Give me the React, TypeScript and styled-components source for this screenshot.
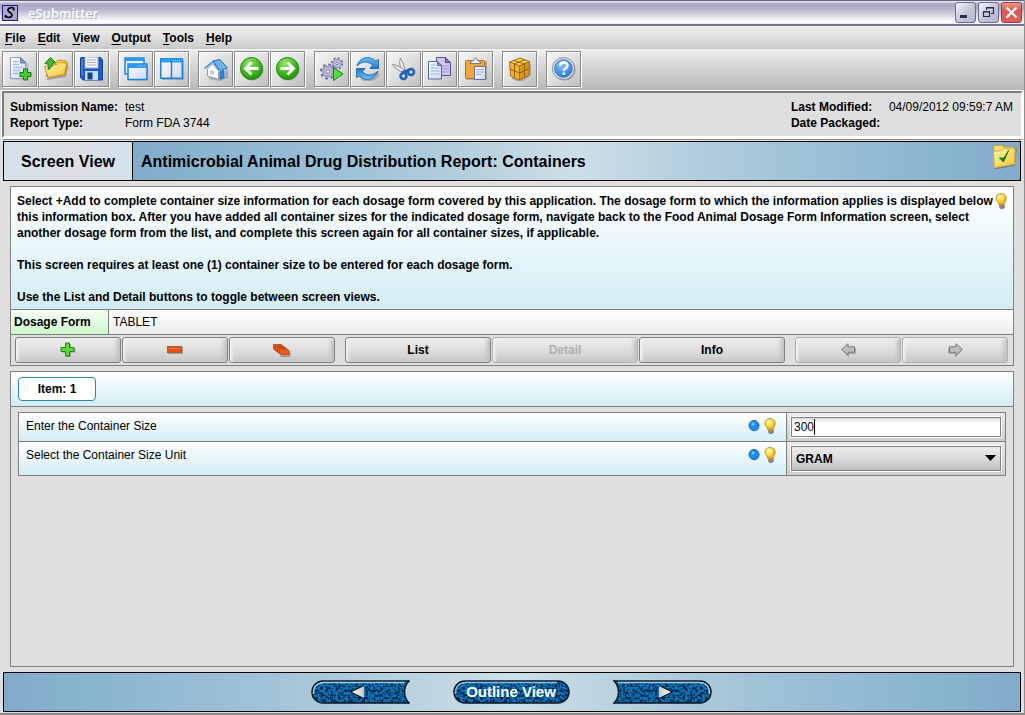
import React, { useState } from "react";
import styled, { createGlobalStyle, css } from "styled-components";

const GlobalStyle = createGlobalStyle`
  *, *::before, *::after { box-sizing: border-box; }
  body {
    margin: 0;
    background: #dfdfdf;
    color: #000;
    font: 12px/16px "Liberation Sans", Arial, sans-serif;
  }
  button, input, select { font: inherit; color: inherit; margin: 0; }
  svg { display: block; flex: none; }
`;

/* ---------- Window frame ---------- */

const Window = styled.div`
  display: flex;
  flex-direction: column;
  min-height: 100vh;
  border-right: 1px solid #8c8c8c;
  border-bottom: 2px solid #8c8c8c;
`;

const TitleBar = styled.header`
  display: flex;
  align-items: center;
  height: 26px;
  padding: 0 2px;
  border-top: 1px solid #66638a;
  border-bottom: 2px solid #77748f;
  background: linear-gradient(#f2f2f7 0, #a9a7c3 3px, #b4b2ca 8px, #dddde7 15px, #ffffff 21px, #eeeef4 100%);
`;

const AppTitle = styled.h1`
  flex: 1;
  margin: 0 0 0 10px;
  color: #fbfbfd;
  font: 600 13px/20px "Open Sans", "Noto Sans", sans-serif;
  text-shadow: 1px 1px 0 #b0afbf;
`;

const CaptionButtons = styled.div`
  display: flex;
  gap: 2px;
`;

const CaptionButton = styled.button<{ $close?: boolean }>`
  display: grid;
  place-items: center;
  width: 21px;
  height: 21px;
  padding: 0;
  border: 1px solid ${(p) => (p.$close ? "#a03a4c" : "#6c6a92")};
  border-radius: 3px;
  background: ${(p) =>
    p.$close
      ? "linear-gradient(#e39a84, #dc5a55 40%, #e0605c)"
      : "linear-gradient(135deg, #f4f4fa, #c8c8dc 50%, #b3b3cc)"};
`;

const MenuBar = styled.nav`
  display: flex;
  gap: 12px;
  height: 23px;
  padding: 4px 5px 0;
  background: linear-gradient(#ededed, #e2e2e2 40%, #c9c9c9);
`;

const MenuItem = styled.button`
  height: 16px;
  padding: 0;
  border: 0;
  background: none;
  font-weight: 700;
  u { text-underline-offset: 2px; }
`;

const Toolbar = styled.div`
  display: flex;
  gap: 9px;
  height: 41px;
  padding: 2px;
  background: linear-gradient(#f0f0f0, #dcdcdc 30%, #b8b8b8);
`;

const ToolGroup = styled.div`
  display: flex;
  gap: 1px;
`;

const ToolButton = styled.button`
  display: grid;
  place-items: center;
  width: 35px;
  height: 36px;
  padding: 0;
  border: 1px solid #8a8a8a;
  box-shadow: 1px 1px 0 #fff, inset 1px 1px 0 #fff;
  background: linear-gradient(135deg, #f7f7f7, #e0e0e0 50%, #bdbdbd);
`;

/* ---------- Submission summary ---------- */

const Summary = styled.section`
  display: flex;
  justify-content: space-between;
  height: 47px;
  margin: 1px 1px 0 2px;
  padding: 6px 8px 4px 6px;
  border: 2px solid;
  border-color: #7c7c7c #fff #fff #7c7c7c;
  box-shadow: 0 0 0 1px #fff, 0 3px 0 -1px #8a8a8a;
`;

const Facts = styled.dl<{ $term: number }>`
  display: grid;
  grid-template-columns: ${(p) => p.$term}px auto;
  grid-auto-rows: 16px;
  margin: 0;
  dt { font-weight: 700; }
  dd { margin: 0; }
`;

/* ---------- Screen heading ---------- */

const steelBlue = css`
  background: linear-gradient(90deg, #82abc9 0, #88b4cf 8%, #9abfd6 22%, #b2cddd 36%, #cddfe8 50%, #b2cddd 64%, #9abfd6 78%, #88b4cf 92%, #82abc9 100%);
`;

const ScreenHeader = styled.div`
  display: flex;
  height: 40px;
  margin: 3px 3px 0;
  border: 1px solid #000;
`;

const ViewLabel = styled.div`
  width: 129px;
  border-right: 1px solid #000;
  background: linear-gradient(90deg, #d3e2ec, #dedee4 50%, #d3e2ec);
  font: 700 16px/40px "Liberation Sans", Arial, sans-serif;
  text-align: center;
`;

const ScreenTitle = styled.div`
  ${steelBlue}
  display: flex;
  flex: 1;
  justify-content: space-between;
  padding: 2px 3px 0 8px;
  h2 { margin: 0; font: 700 16px/36px "Liberation Sans", Arial, sans-serif; }
`;

/* ---------- Panels ---------- */

const ice = css`
  background: linear-gradient(#fff, #e4f5fa 60%, #d3ecf4);
`;

const Panel = styled.section<{ $fill?: boolean }>`
  ${(p) => p.$fill && "flex: 1;"}
  margin: 5px 10px 0;
  border: 1px solid #808080;
`;

const Help = styled.div`
  ${ice}
  display: flex;
  justify-content: space-between;
  padding: 6px 5px 4px 6px;
  border-bottom: 1px solid #808080;
  font-weight: 700;
  p { margin: 0 0 16px; }
  p:last-child { margin: 0; }
`;

const DosageRow = styled.div`
  display: flex;
  height: 25px;
  border-bottom: 1px solid #808080;
  background: linear-gradient(#fff, #ececec);
  line-height: 24px;
`;

const DosageLabel = styled.div`
  width: 98px;
  margin-right: 4px;
  padding-left: 3px;
  border-right: 1px solid #808080;
  background: linear-gradient(#f6fff6, #ccf7cc);
  font-weight: 700;
`;

const ButtonRow = styled.div`
  display: flex;
  gap: 10px;
  padding: 2px 5px 2px 4px;
`;

const ButtonGroup = styled.div<{ $grow: number }>`
  display: flex;
  gap: 1px;
  flex: ${(p) => p.$grow} 1 0;
`;

const ActionButton = styled.button`
  display: flex;
  flex: 1;
  align-items: center;
  justify-content: center;
  height: 26px;
  padding: 0;
  border: 1px solid #808080;
  border-radius: 3px;
  background: linear-gradient(#efefef, #dedede 50%, #cacaca);
  box-shadow: inset 2px 1px 3px #f4f4f4, inset -3px -1px 4px #bebebe;
  font-weight: 700;
  &:disabled {
    border-color: #b0b0b0;
    color: #b0b0b0;
  }
`;

const TabStrip = styled.div`
  ${ice}
  height: 35px;
  padding: 5px 7px;
  border-bottom: 1px solid #808080;
`;

const Tab = styled.button`
  width: 78px;
  height: 24px;
  padding: 0;
  border: 1px solid #2d87a3;
  border-radius: 4px;
  background: #fff;
  font-weight: 700;
`;

const Fields = styled.form`
  margin: 5px 7px;
  border: 1px solid #808080;
`;

const Field = styled.div<{ $height: number }>`
  display: grid;
  grid-template-columns: minmax(0, 1fr) 218px;
  height: ${(p) => p.$height}px;
  & + & { border-top: 1px solid #808080; }
`;

const FieldLabel = styled.div`
  ${ice}
  display: flex;
  align-items: flex-start;
  gap: 3px;
  padding: 5px 9px 0 7px;
  border-right: 1px solid #808080;
  label { flex: 1; }
`;

const FieldControl = styled.div`
  position: relative;
  padding: 4px;
  background: linear-gradient(#ebebeb, #dadada 50%, #cecece);
`;

const boxed = css`
  display: block;
  width: 100%;
  border: 1px solid #808080;
  outline: 1px solid #fff;
`;

const TextInput = styled.input`
  ${boxed}
  height: 20px;
  padding: 0 2px;
  background: linear-gradient(#dcdcdc, #fff 5px);
`;

const Caret = styled.span`
  position: absolute;
  top: 6px;
  left: 27px;
  width: 1px;
  height: 16px;
  background: #000;
`;

const SelectBox = styled.div`
  position: relative;
  svg {
    position: absolute;
    top: 9px;
    right: 5px;
    pointer-events: none;
  }
`;

const Select = styled.select`
  ${boxed}
  height: 25px;
  padding: 0 4px;
  appearance: none;
  border-radius: 0;
  background: linear-gradient(#ebebeb, #dcdcdc 50%, #bebebe);
  font-weight: 700;
`;

/* ---------- Footer ---------- */

const Footer = styled.footer`
  ${steelBlue}
  display: flex;
  align-items: center;
  justify-content: center;
  gap: 43px;
  height: 40px;
  margin: 5px 3px 1px;
  padding-right: 2px;
  border: 1px solid #000;
`;

const NavButton = styled.button`
  display: grid;
  place-items: center;
  padding: 0;
  border: 0;
  background: none;
  color: #fff;
  font: 700 15px/24px "Liberation Sans", Arial, sans-serif;
  & > * { grid-area: 1 / 1; }
  span { z-index: 1; }
`;

/* ---------- Icons ---------- */

type IconProps = { children: React.ReactNode; w?: number; h?: number };

const Icon = ({ children, w = 24, h = 24 }: IconProps) => (
  <svg width={w} height={h} viewBox={`0 0 ${w} ${h}`} fill="none" aria-hidden="true">
    {children}
  </svg>
);

const Defs = styled.svg`
  position: absolute;
  width: 0;
  height: 0;
`;

const Gradients = () => (
  <Defs aria-hidden="true">
    <defs>
      <linearGradient id="paper" x1="0" y1="0" x2="1" y2="1">
        <stop stopColor="#fff" />
        <stop offset="1" stopColor="#cfd6f2" />
      </linearGradient>
      <linearGradient id="gold" x1="0" y1="0" x2="1" y2="1">
        <stop stopColor="#fff6b0" />
        <stop offset="1" stopColor="#f2c22c" />
      </linearGradient>
      <linearGradient id="sky" x1="0" y1="0" x2="0" y2="1">
        <stop stopColor="#6cc0fa" />
        <stop offset="1" stopColor="#1f78cc" />
      </linearGradient>
      <radialGradient id="green" cx=".4" cy=".25" r=".8">
        <stop stopColor="#9be36a" />
        <stop offset=".6" stopColor="#3fb81c" />
        <stop offset="1" stopColor="#1e8a10" />
      </radialGradient>
      <radialGradient id="blue" cx=".4" cy=".25" r=".8">
        <stop stopColor="#8cc8ff" />
        <stop offset="1" stopColor="#2277dd" />
      </radialGradient>
      <radialGradient id="bulb" cx=".4" cy=".3" r=".7">
        <stop stopColor="#fffbd0" />
        <stop offset=".5" stopColor="#ffd93b" />
        <stop offset="1" stopColor="#e39a10" />
      </radialGradient>
      <linearGradient id="shine" x1="0" y1="0" x2="1" y2="0">
        <stop stopColor="#fff" />
        <stop offset="1" stopColor="#c4c4c4" />
      </linearGradient>
      <filter id="granite" x="0" y="0" width="1" height="1" colorInterpolationFilters="sRGB">
        <feTurbulence type="fractalNoise" baseFrequency=".4" numOctaves="2" seed="4" />
        <feColorMatrix values="0 0 0 0 0  0 0 0 0 .14  0 0 0 0 .3  5 0 0 0 -2.2" />
        <feComposite in2="SourceGraphic" operator="in" />
      </filter>
    </defs>
  </Defs>
);

const AppIcon = () => (
  <Icon w={16} h={16}>
    <rect x=".5" y=".5" width="15" height="15" fill="#aaa7cf" stroke="#241a86" />
    <path d="M12 3.5C10 2 6 2.600 6 5.200C6 7.500 10.500 7.800 10 10.400C9.600 12.800 6 13 3.500 11.500M12 3l-.5 2.500M3.800 10l-.5 2.500" stroke="#08080c" strokeWidth="1.800" />
  </Icon>
);

const NewIcon = () => (
  <Icon>
    <path d="M3.500 1.500h11l6 6v15h-17z" fill="#9a9a9a" opacity=".5" />
    <path d="M2.500.5h10l5 5v16h-15z" fill="url(#paper)" stroke="#8d9cbc" />
    <path d="M12.500.5v5.500h5.500z" fill="#6f9fd4" stroke="#5b7fb0" />
    <path d="M5 4.500h5M5 7.500h6M5 10.500h10M5 13.500h7M5 16.500h5" stroke="#a9c0e2" strokeWidth="1.500" />
    <path d="M15.500 12h4v3.500H23v4h-3.500V23h-4v-3.500H12v-4h3.500z" fill="#46cf2c" stroke="#117a10" />
  </Icon>
);

const OpenIcon = () => (
  <Icon>
    <path d="M3 22l18-3 3-13" stroke="#777" opacity=".6" strokeWidth="2" />
    <path d="M2.500 19.500L6 6.500l6-.5 2-3 8 1v13z" fill="#f9dc5c" stroke="#c08a18" />
    <path d="M.5 9.500l12.500-2 2-2 8 .5-2.500 11.500-16.500 3z" fill="url(#gold)" stroke="#c89018" />
    <path d="M1 6.500L6.500.5l5 5-3 .5c0 3-1 5-4.500 6.500C4.500 10 4.500 9 4 7z" fill="#41bb2c" stroke="#1a7d18" />
  </Icon>
);

const SaveIcon = () => (
  <Icon>
    <path d="M1 .5h19.500l2 2.500v20H3L.5 20.500V1z" fill="#1c5bc4" stroke="#123c8c" />
    <rect x="5" y="0" width="13" height="11" fill="#f1f1f1" stroke="#9bb4dc" />
    <path d="M7 3h9M7 5.500h9M7 8h9" stroke="#b6b6b6" />
    <rect x="5" y="14" width="13" height="9" fill="#bfe0fa" />
    <rect x="7.500" y="15.500" width="5" height="7" fill="#1d3f80" />
    <path d="M2 2v17" stroke="#5aa0f0" />
  </Icon>
);

const WindowsIcon = () => (
  <Icon>
    <rect x="1" y="1" width="19" height="16" fill="#e9f1fd" stroke="#1b83e2" strokeWidth="1.500" />
    <path d="M1 2.500h19" stroke="#2c9af5" strokeWidth="3" />
    <rect x="5" y="8.500" width="19" height="15" fill="#777" opacity=".5" />
    <rect x="4" y="7" width="19" height="15.500" fill="url(#paper)" stroke="#1b83e2" strokeWidth="1.500" />
    <path d="M4 9h19" stroke="#2c9af5" strokeWidth="4" />
    <path d="M14 9h7" stroke="#9cd4ff" strokeDasharray="1 1" />
  </Icon>
);

const SplitIcon = () => (
  <Icon>
    <rect x="2" y="3" width="22" height="20" fill="#777" opacity=".5" />
    <rect x=".75" y="1.750" width="21.500" height="19.500" fill="url(#paper)" stroke="#1b83e2" strokeWidth="1.500" />
    <path d="M1 3.500h21" stroke="#2c9af5" strokeWidth="4" />
    <path d="M11.500 4v17" stroke="#1b83e2" strokeWidth="1.500" />
    <path d="M13 3.500h7" stroke="#9cd4ff" strokeDasharray="1 1" />
  </Icon>
);

const HomeIcon = () => (
  <Icon>
    <path d="M5 21l11 2 7-3v-7" stroke="#777" strokeWidth="2" opacity=".5" />
    <path d="M3.500 12l5-5 6 6.500v9l-11-3.500z" fill="#fafafa" stroke="#999" />
    <path d="M14.500 13.500L20 10l2 2v8l-7.500 2.500z" fill="#dce8f6" stroke="#8a9bb4" />
    <path d="M.5 11.500L9 4.500l6.500 8.500" stroke="#3a87cc" strokeWidth="1.500" />
    <path d="M9 4l7-1.500L23.500 11l-8 2.500z" fill="#6cb4ee" stroke="#2a70b0" />
    <path d="M16 15l4-1.500v7L16 22z" fill="#2f8ce0" stroke="#1b62a8" />
    <path d="M6 13l4 1v4l-4-1z" fill="#b7cde6" />
  </Icon>
);

const BackIcon = ({ flip = false }: { flip?: boolean }) => (
  <Icon>
    <circle cx="12.500" cy="12.500" r="11" fill="#777" opacity=".5" />
    <circle cx="11.500" cy="11.500" r="11" fill="url(#green)" stroke="#1f8512" />
    <g transform={flip ? "translate(23 0) scale(-1 1)" : undefined}>
      <path d="M18.500 11.500H6M11.500 5.500l-6 6 6 6" stroke="#fff" strokeWidth="2.800" />
    </g>
  </Icon>
);

const RunIcon = () => (
  <Icon>
    <circle cx="17" cy="6.500" r="5.300" stroke="#74749c" strokeWidth="2" strokeDasharray="2.100 2.060" />
    <circle cx="17" cy="6.500" r="3.800" fill="#c9c9e4" stroke="#a0a0c6" strokeWidth="1.800" />
    <circle cx="17" cy="6.500" r="1.300" fill="#f2f2f2" stroke="#74749c" />
    <circle cx="8" cy="14.500" r="7" stroke="#74749c" strokeWidth="2.200" strokeDasharray="2.750 2.750" />
    <circle cx="8" cy="14.500" r="5" fill="#c9c9e4" stroke="#a0a0c6" strokeWidth="2.500" />
    <circle cx="8" cy="14.500" r="2" fill="#f2f2f2" stroke="#74749c" />
    <path d="M13.500 10.500l9.500 6.500-9.500 6.500z" fill="#5bdc3c" stroke="#15801a" />
  </Icon>
);

const turn = "M1 9C2.500 3.500 7 .5 11.500.5c3.500 0 6 1.500 7.500 3.500L22.500 2.500V11.500h-8.500l2.500-3.200C12.500 3.800 5.500 4 1 9z";

const RefreshIcon = () => (
  <Icon>
    <path d="M2 16l4 6c5 3 13 2 17-5" stroke="#777" strokeWidth="2" opacity=".45" />
    <path d={turn} fill="url(#sky)" stroke="#165da8" strokeWidth=".8" />
    <path d={turn} fill="url(#sky)" stroke="#165da8" strokeWidth=".8" transform="rotate(180 11.500 11.500)" />
  </Icon>
);

const CutIcon = () => (
  <Icon>
    <path d="M8.500 1c2 3.500 3.500 8 4.500 12.500l-2.500 1C8 10 7 5.500 8.500 1z" fill="#f6f6f6" stroke="#8c8c8c" />
    <path d="M.5 7.500c4.500.5 9 3 12.500 6l-1.500 2C8 14 2.500 12 .5 7.500z" fill="#ececec" stroke="#8c8c8c" />
    <ellipse cx="11.500" cy="19" rx="3" ry="3" stroke="#1c62b8" strokeWidth="2.500" />
    <ellipse cx="19" cy="15" rx="3" ry="3" stroke="#1c62b8" strokeWidth="2.500" />
    <path d="M10.500 15.500l6-2" stroke="#1c62b8" strokeWidth="3" />
  </Icon>
);

const CopyIcon = () => (
  <Icon>
    <path d="M8.500.5h9l5 5v13h-14z" fill="#cfc6ea" stroke="#5c4c96" />
    <path d="M17.500.5v5h5z" fill="#8674be" stroke="#5c4c96" />
    <path d="M14 9h7M14 12h7M14 15h7" stroke="#a395d2" />
    <path d="M.5 4.500h9l4 4v13.500H.5z" fill="url(#paper)" stroke="#4a6c9e" />
    <path d="M9.500 4.500v4h4z" fill="#6fa4da" stroke="#4a6c9e" />
    <path d="M2.500 8h5M2.500 11h9M2.500 14h9M2.500 17h9" stroke="#b4c9e8" strokeWidth="1.500" />
  </Icon>
);

const PasteIcon = () => (
  <Icon>
    <rect x="2" y="4" width="21" height="19" rx="1" fill="#777" opacity=".5" />
    <rect x="1.500" y="3.500" width="19" height="18" rx="1" fill="#f0a63a" stroke="#b87414" />
    <path d="M6 6.500l2-3h1.500c0-3.500 4-3.500 4 0H15l2 3z" fill="#ececec" stroke="#7c7c7c" />
    <path d="M10.500 9.500h11v13h-11z" fill="url(#paper)" stroke="#6470ac" />
    <path d="M12 12.500h8M12 15h8M12 17.500h5" stroke="#a0a9d6" />
  </Icon>
);

const PackageIcon = () => (
  <Icon>
    <path d="M4 21l9 3 9-6V7" stroke="#777" strokeWidth="2" opacity=".5" />
    <path d="M1.500 5L12 1l9.500 3.500L11.500 9z" fill="#fbcf58" stroke="#a87010" />
    <path d="M1.500 5l10 4v14l-9-4z" fill="#f4b22c" stroke="#a87010" />
    <path d="M21.500 4.500l-10 4.500v14l9.500-5z" fill="#dd9418" stroke="#a87010" />
    <path d="M6 3.500L16.500 7v13.500M17 2.800L6.500 7v13.500M2 12l9.500 4 9.500-4.500" stroke="#7c4e04" strokeWidth=".8" />
  </Icon>
);

const HelpIcon = () => (
  <Icon>
    <circle cx="12.500" cy="12.500" r="11" fill="#777" opacity=".6" />
    <circle cx="11.500" cy="11.500" r="11" fill="#dfe4ea" stroke="#858d96" />
    <circle cx="11.500" cy="11.500" r="8.800" fill="url(#blue)" stroke="#3b74bc" />
    <path d="M8 9c0-4.500 7.500-4.500 7.500-.5 0 3-3.700 2.500-3.700 5.500M11.800 15.500v2.500" stroke="#fff" strokeWidth="2.400" />
  </Icon>
);

const FolderCheckIcon = () => (
  <Icon w={25} h={25}>
    <path d="M3 24.500l19-3.500 2-17" stroke="#4e6c80" strokeWidth="2" opacity=".6" />
    <path d="M1.500 3.500l1-2 7-.5 2 2h10.500l1 2-.5 15-20 3.500z" fill="#f9dc74" stroke="#c99a30" />
    <path d="M1.500 7.500l8-1 2-2 11.500.5-.5 15-20 3.500z" fill="url(#gold)" stroke="#dcb044" />
    <path d="M7.500 14l4 4 5-11.500L12 14z" fill="#118025" stroke="#118025" />
  </Icon>
);

const BulbIcon = () => (
  <Icon w={14} h={16}>
    <path d="M5.500 12.500h5v2l-2 1.500H7L5.500 14.500z" fill="#8a8a8a" stroke="#666" strokeWidth=".5" />
    <path d="M7 .5c3.300 0 5.200 2.200 5.200 4.800 0 3-2.200 3.700-2.200 6.700H5c0-3-3-3.700-3-6.700C2 2.700 3.700.5 7 .5z" fill="url(#bulb)" stroke="#b9811c" strokeWidth=".8" />
  </Icon>
);

const RequiredIcon = () => (
  <Icon w={12} h={16}>
    <circle cx="6.500" cy="8.500" r="5" fill="#777" opacity=".5" />
    <circle cx="6" cy="7.500" r="5" fill="#178cf2" stroke="#1668c0" />
    <circle cx="5" cy="6" r="1.500" fill="#7cc4ff" />
  </Icon>
);

const AddIcon = () => (
  <Icon w={16} h={16}>
    <path d="M6 2h5v4.500h4.500v4H11V15H6v-4.500H2v-4h4z" fill="#777" opacity=".6" />
    <path d="M5.500 1h4v4.500H14v4H9.500V14h-4V9.500H1v-4h4.500z" fill="#5cd63c" stroke="#1c8a1a" />
  </Icon>
);

const RemoveIcon = () => (
  <Icon w={16} h={8}>
    <rect x="1" y="1" width="15" height="7" fill="#777" opacity=".6" />
    <rect x=".5" y=".5" width="14" height="6" fill="#ee4a18" stroke="#a8602c" />
    <path d="M2 2.500h11" stroke="#ff8a4c" />
  </Icon>
);

const RemoveAllIcon = () => (
  <Icon w={18} h={13}>
    <path d="M7 12.500h10V7" stroke="#777" opacity=".7" />
    {[0, 1, 2, 3].map((n) => (
      <path
        key={n}
        d={`M${n * 2 + 0.5} ${n * 1.5 + 0.5}h8l1.500 2v4h-8l-1.500-2z`}
        fill="#f0561e"
        stroke="#a04a20"
        strokeWidth=".8"
      />
    ))}
  </Icon>
);

const ArrowIcon = ({ flip = false }: { flip?: boolean }) => (
  <Icon w={15} h={14}>
    <g transform={flip ? "translate(15 0) scale(-1 1)" : undefined}>
      <path d="M1.500 7.500l6 6v-3h7V5" stroke="#777" opacity=".5" />
      <path d="M.7 6.500L7 .8v3h6.500v5.500H7v3z" fill="#bfbfbf" stroke="#787878" />
    </g>
  </Icon>
);

const ribbonShape = "M12 1H98C92 7 92 17 98 23H12A11 11 0 0 1 12 1z";

const Ribbon = ({ flip = false }: { flip?: boolean }) => (
  <Icon w={99} h={24}>
    <g transform={flip ? "translate(99 0) scale(-1 1)" : undefined}>
      <path d={ribbonShape} fill="#0f74b4" />
      <path d={ribbonShape} fill="#000" filter="url(#granite)" />
      <path d={ribbonShape} stroke="#0a1622" strokeWidth="1.500" />
      <path d="M2.500 14C2 6 7 2.500 13 2.500H94" stroke="#9fcbe2" strokeWidth="1.500" />
      <path d="M38.500 12L53 5v14z" fill="#111" />
      <path d="M41 12L53 6v12z" fill="url(#shine)" />
    </g>
  </Icon>
);

const Pill = () => (
  <Icon w={117} h={24}>
    <rect x="1" y="1" width="115" height="22" rx="11" fill="#0f74b8" />
    <rect x="1" y="1" width="115" height="22" rx="11" fill="#000" filter="url(#granite)" />
    <rect x="1" y="1" width="115" height="22" rx="11" stroke="#0a1622" strokeWidth="1.500" />
    <path d="M2.500 14C2 6 7 2.500 13 2.500H104" stroke="#86bfe0" strokeWidth="1.500" />
  </Icon>
);

/* ---------- Data ---------- */

const menus = ["File", "Edit", "View", "Output", "Tools", "Help"];

const tools: [string, React.ReactNode][][] = [
  [["New", <NewIcon />], ["Open", <OpenIcon />], ["Save", <SaveIcon />]],
  [["Windows", <WindowsIcon />], ["Split view", <SplitIcon />]],
  [["Home", <HomeIcon />], ["Back", <BackIcon />], ["Forward", <BackIcon flip />]],
  [["Run", <RunIcon />], ["Refresh", <RefreshIcon />], ["Cut", <CutIcon />], ["Copy", <CopyIcon />], ["Paste", <PasteIcon />]],
  [["Package", <PackageIcon />]],
  [["Help", <HelpIcon />]],
];

export default function App() {
  const [size, setSize] = useState("300");

  return (
    <Window>
      <GlobalStyle />
      <Gradients />
      <TitleBar>
        <AppIcon />
        <AppTitle>eSubmitter</AppTitle>
        <CaptionButtons>
          <CaptionButton aria-label="Minimize">
            <Icon w={15} h={15}><path d="M2 11.500h7" stroke="#2a2a4a" strokeWidth="3" /></Icon>
          </CaptionButton>
          <CaptionButton aria-label="Restore">
            <Icon w={15} h={15}>
              <path d="M5.500 5V2.500h7v6H10M5.500 3h7M2.500 6.500h6v5h-6zM2.500 7h6" stroke="#2a2a4a" strokeWidth="1.200" />
            </Icon>
          </CaptionButton>
          <CaptionButton aria-label="Close" $close>
            <Icon w={15} h={15}><path d="M2.500 2.500l10 10M12.500 2.500l-10 10" stroke="#fff" strokeWidth="2.200" /></Icon>
          </CaptionButton>
        </CaptionButtons>
      </TitleBar>

      <MenuBar>
        {menus.map((name) => (
          <MenuItem key={name}><u>{name[0]}</u>{name.slice(1)}</MenuItem>
        ))}
      </MenuBar>

      <Toolbar role="toolbar">
        {tools.map((group, i) => (
          <ToolGroup key={i}>
            {group.map(([name, icon]) => (
              <ToolButton key={name} aria-label={name}>{icon}</ToolButton>
            ))}
          </ToolGroup>
        ))}
      </Toolbar>

      <Summary>
        <Facts $term={115}>
          <dt>Submission Name:</dt><dd>test</dd>
          <dt>Report Type:</dt><dd>Form FDA 3744</dd>
        </Facts>
        <Facts $term={98}>
          <dt>Last Modified:</dt><dd>04/09/2012 09:59:7 AM</dd>
          <dt>Date Packaged:</dt><dd />
        </Facts>
      </Summary>

      <ScreenHeader>
        <ViewLabel>Screen View</ViewLabel>
        <ScreenTitle>
          <h2>Antimicrobial Animal Drug Distribution Report: Containers</h2>
          <FolderCheckIcon />
        </ScreenTitle>
      </ScreenHeader>

      <Panel>
        <Help>
          <div>
            <p>
              Select +Add to complete container size information for each dosage form covered by this
              application. The dosage form to which the information applies is displayed below this
              information box. After you have added all container sizes for the indicated dosage form,
              navigate back to the Food Animal Dosage Form Information screen, select another dosage form
              from the list, and complete this screen again for all container sizes, if applicable.
            </p>
            <p>This screen requires at least one (1) container size to be entered for each dosage form.</p>
            <p>Use the List and Detail buttons to toggle between screen views.</p>
          </div>
          <BulbIcon />
        </Help>
        <DosageRow>
          <DosageLabel>Dosage Form</DosageLabel>
          TABLET
        </DosageRow>
        <ButtonRow>
          <ButtonGroup $grow={320}>
            <ActionButton aria-label="Add"><AddIcon /></ActionButton>
            <ActionButton aria-label="Remove"><RemoveIcon /></ActionButton>
            <ActionButton aria-label="Remove all"><RemoveAllIcon /></ActionButton>
          </ButtonGroup>
          <ButtonGroup $grow={440}>
            <ActionButton>List</ActionButton>
            <ActionButton disabled>Detail</ActionButton>
            <ActionButton>Info</ActionButton>
          </ButtonGroup>
          <ButtonGroup $grow={213}>
            <ActionButton disabled aria-label="Previous item"><ArrowIcon /></ActionButton>
            <ActionButton disabled aria-label="Next item"><ArrowIcon flip /></ActionButton>
          </ButtonGroup>
        </ButtonRow>
      </Panel>

      <Panel $fill>
        <TabStrip><Tab>Item: 1</Tab></TabStrip>
        <Fields>
          <Field $height={28}>
            <FieldLabel>
              <label htmlFor="size">Enter the Container Size</label>
              <RequiredIcon />
              <BulbIcon />
            </FieldLabel>
            <FieldControl>
              <TextInput id="size" value={size} onChange={(e) => setSize(e.target.value)} />
              <Caret />
            </FieldControl>
          </Field>
          <Field $height={34}>
            <FieldLabel>
              <label htmlFor="unit">Select the Container Size Unit</label>
              <RequiredIcon />
              <BulbIcon />
            </FieldLabel>
            <FieldControl>
              <SelectBox>
                <Select id="unit" defaultValue="GRAM">
                  <option>GRAM</option>
                </Select>
                <Icon w={11} h={6}><path d="M0 0h11L5.500 6z" fill="#000" /></Icon>
              </SelectBox>
            </FieldControl>
          </Field>
        </Fields>
      </Panel>

      <Footer>
        <NavButton aria-label="Previous screen"><Ribbon /></NavButton>
        <NavButton><Pill /><span>Outline View</span></NavButton>
        <NavButton aria-label="Next screen"><Ribbon flip /></NavButton>
      </Footer>
    </Window>
  );
}
